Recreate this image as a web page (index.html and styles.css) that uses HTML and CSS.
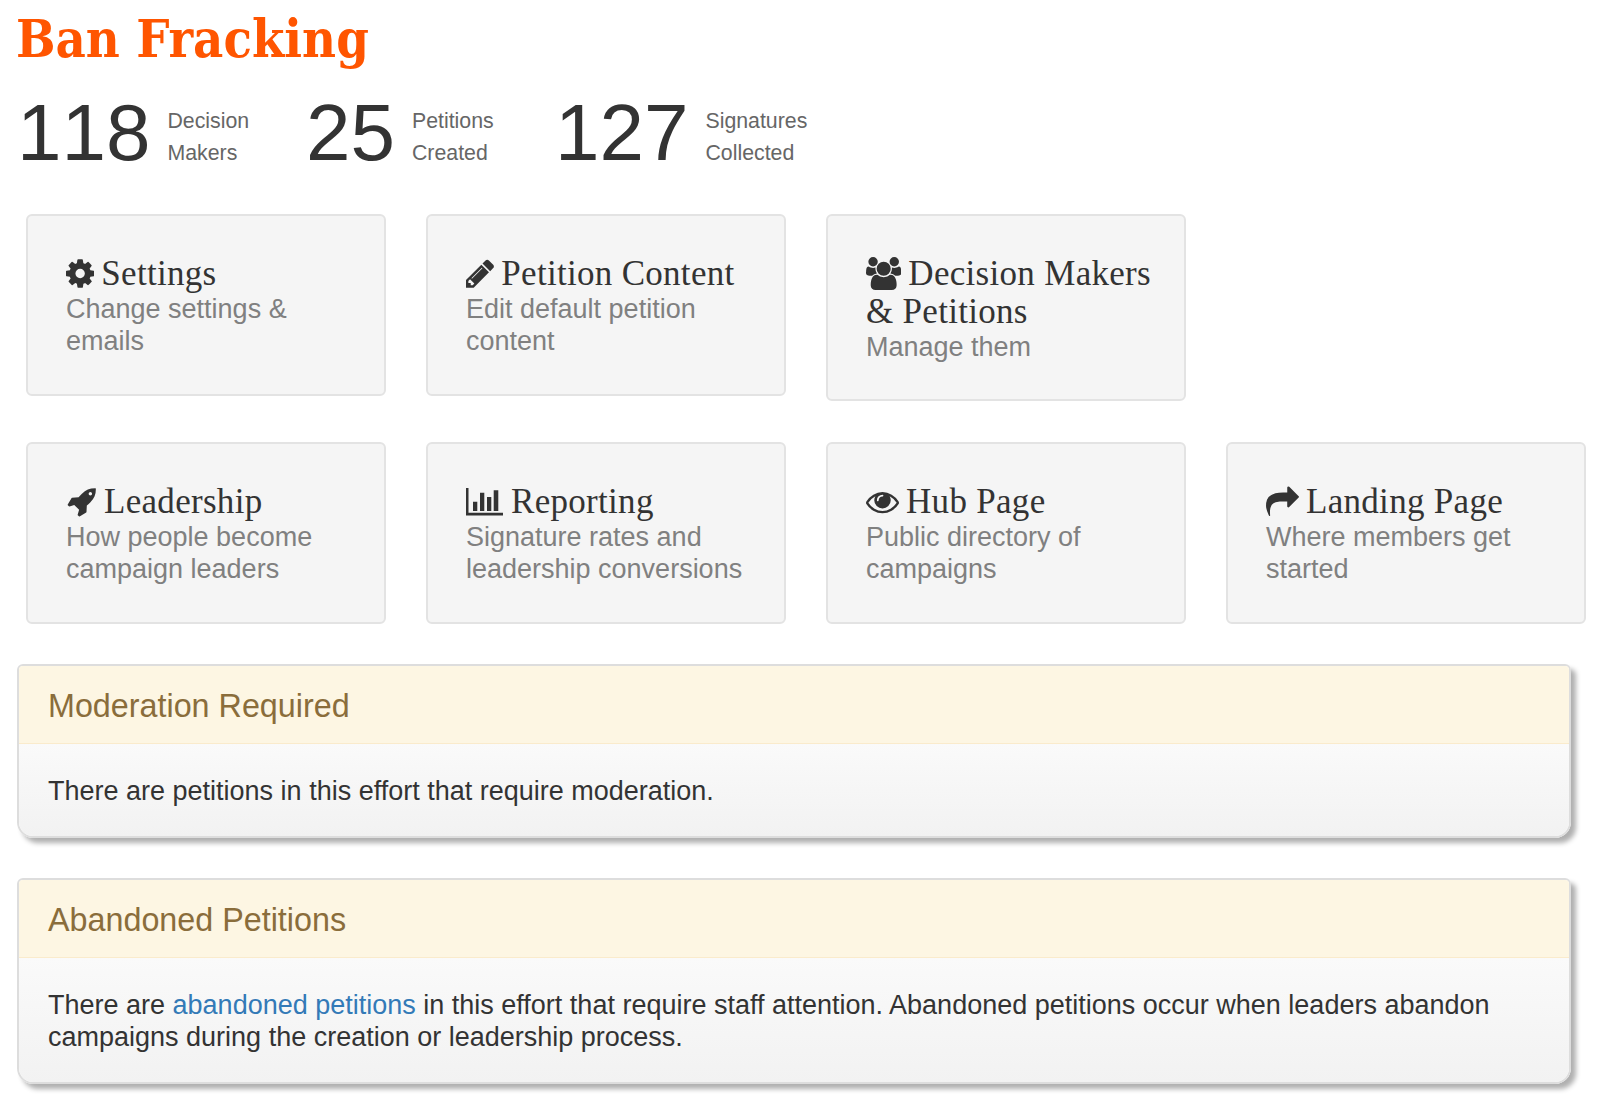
FILE: index.html
```html
<!DOCTYPE html>
<html lang="en">
<head>
    <meta charset="UTF-8">
    <title>Ban Fracking</title>
    <link rel="stylesheet" href="styles.css">
</head>
<body>
    <h1 class="title">Ban Fracking</h1>

    <div class="stats">
        <div class="stat stat-one">
            <span class="stat-number">118</span>
            <span class="stat-label">Decision<br>Makers</span>
        </div>
        <div class="stat stat-two">
            <span class="stat-number">25</span>
            <span class="stat-label">Petitions<br>Created</span>
        </div>
        <div class="stat">
            <span class="stat-number">127</span>
            <span class="stat-label">Signatures<br>Collected</span>
        </div>
    </div>

    <div class="card-row">
        <a class="card">
            <h3><svg class="icon" viewBox="0 0 1536 1792"><path d="M1024 896q0-106-75-181t-181-75-181 75-75 181 75 181 181 75 181-75 75-181zm512-109v222q0 12-8 23t-20 13l-185 28q-19 54-39 91 35 50 107 138 10 12 10 25t-9 23q-27 37-99 108t-94 71q-12 0-26-9l-138-108q-44 23-91 38-16 136-29 186-7 28-36 28h-222q-14 0-24.500-8.500t-11.500-21.500l-28-184q-49-16-90-37l-141 107q-10 9-25 9-14 0-25-11-126-114-165-168-7-10-7-23 0-12 8-23 15-21 51-66.500t54-70.500q-27-50-41-99l-183-27q-13-2-21-12.500t-8-23.500v-222q0-12 8-23t19-13l186-28q14-46 39-92-40-57-107-138-10-12-10-24 0-10 9-23 26-36 98.500-107.500t94.500-71.500q13 0 26 10l138 107q44-23 91-38 16-136 29-186 7-28 36-28h222q14 0 24.500 8.500t11.500 21.500l28 184q49 16 90 37l142-107q9-9 24-9 13 0 25 10 129 119 165 170 7 8 7 22 0 12-8 23-15 21-51 66.500t-54 70.500q26 50 41 98l183 28q13 2 21 12.500t8 23.500z"/></svg>Settings</h3>
            <p>Change settings &amp; emails</p>
        </a>
        <a class="card">
            <h3><svg class="icon" viewBox="0 0 1536 1792"><path d="M363 1536l91-91-235-235-91 91v107h128v128h107zm523-928q0-22-22-22-10 0-17 7l-542 542q-7 7-7 17 0 22 22 22 10 0 17-7l542-542q7-7 7-17zm-54-192l416 416-832 832h-416v-416zm683 96q0 53-37 90l-166 166-416-416 166-165q36-38 90-38 53 0 91 38l235 234q37 39 37 91z"/></svg>Petition Content</h3>
            <p>Edit default petition content</p>
        </a>
        <a class="card">
            <h3><svg class="icon" viewBox="0 0 1920 1792"><path d="M593 896q-162 5-265 128h-134q-82 0-138-40.500t-56-118.500q0-353 124-353 6 0 43.500 21t97.500 42.500 119 21.500q67 0 133-23-5 37-5 66 0 139 81 256zm1071 637q0 120-73 189.500t-194 69.500h-874q-121 0-194-69.500t-73-189.500q0-53 3.500-103.500t14-109 26.500-108.500 43-97.500 62-81 85.500-53.500 111.500-20q10 0 43 21.500t73 48 107 48 135 21.500 135-21.500 107-48 73-48 43-21.500q61 0 111.500 20t85.500 53.500 62 81 43 97.500 26.500 108.500 14 109 3.500 103.500zm-1024-1277q0 106-75 181t-181 75-181-75-75-181 75-181 181-75 181 75 75 181zm704 384q0 159-112.500 271.500t-271.500 112.500-271.500-112.500-112.500-271.500 112.500-271.500 271.500-112.500 271.500 112.500 112.500 271.500zm576 225q0 78-56 118.500t-138 40.500h-134q-103-123-265-128 81-117 81-256 0-29-5-66 66 23 133 23 59 0 119-21.500t97.500-42.500 43.500-21q124 0 124 353zm-128-609q0 106-75 181t-181 75-181-75-75-181 75-181 181-75 181 75 75 181z"/></svg>Decision Makers &amp; Petitions</h3>
            <p>Manage them</p>
        </a>
    </div>

    <div class="card-row">
        <a class="card">
            <h3><svg class="icon icon-rocket" viewBox="0 0 1792 1792"><path d="M1504 448q0-40-28-68t-68-28-68 28-28 68 28 68 68 28 68-28 28-68zm224-288q0 249-75.500 430.500t-253.500 360.500q-81 80-195 176l-20 379q-2 16-16 26l-384 224q-7 4-16 4-12 0-23-9l-64-64q-13-14-8-32l85-276-281-281-276 85q-3 1-9 1-14 0-23-9l-64-64q-17-19-5-39l224-384q10-14 26-16l379-20q96-114 176-195 188-187 358-258t431-71q14 0 24 9.500t10 22.500z"/></svg>Leadership</h3>
            <p>How people become campaign leaders</p>
        </a>
        <a class="card">
            <h3><svg class="icon icon-chart" viewBox="0 0 37 28"><path d="M0 0h2.500v24.700H37v2.800H0zM7 13.700h4.300V23H7zM14 4.700h4.300V23H14zM21 9h4.300v14H21zM27.700 2.300h4.600V23h-4.600z"/></svg>Reporting</h3>
            <p>Signature rates and leadership conversions</p>
        </a>
        <a class="card">
            <h3><svg class="icon" viewBox="0 0 1792 1792"><path d="M1664 960q-152-236-381-355 61 104 61 225 0 185-131.500 316.500t-316.500 131.500-316.500-131.500-131.500-316.500q0-121 61-225-229 119-381 355 133 205 333.500 326.500t434.500 121.500 434.500-121.500 333.500-326.500zm-720-384q0-20-14-34t-34-14q-125 0-214.500 89.500t-89.500 214.500q0 20 14 34t34 14 34-14 14-34q0-86 61-147t147-61q20 0 34-14t14-34zm848 384q0 34-20 69-140 230-376.500 368.500t-499.500 138.500-499.500-139-376.500-368q-20-35-20-69t20-69q140-229 376.500-368t499.500-139 499.500 139 376.500 368q20 35 20 69z"/></svg>Hub Page</h3>
            <p>Public directory of campaigns</p>
        </a>
        <a class="card">
            <h3><svg class="icon" viewBox="0 0 1792 1792"><path d="M1792 640q0 26-19 45l-512 512q-19 19-45 19t-45-19-19-45v-256h-224q-98 0-175.500 6t-154 21.500-133 42.500-105.500 69.500-79.500 103.500-47.500 143.500-17.500 190q0 55 5 123 0 6 2.500 23.500t2.500 26.500q0 15-8.500 25t-23.500 10q-16 0-28-17-7-9-13-22t-13.500-30-10.500-24q-127-285-127-451 0-199 53-333 162-403 875-403h224v-256q0-26 19-45t45-19 45 19l512 512q19 19 19 45z"/></svg>Landing Page</h3>
            <p>Where members get started</p>
        </a>
    </div>

    <div class="panel">
        <div class="panel-heading">Moderation Required</div>
        <div class="panel-body">There are petitions in this effort that require moderation.</div>
    </div>

    <div class="panel">
        <div class="panel-heading">Abandoned Petitions</div>
        <div class="panel-body">There are <a href="#">abandoned petitions</a> in this effort that require staff attention. Abandoned petitions occur when leaders abandon campaigns during the creation or leadership process.</div>
    </div>
</body>
</html>
```

FILE: styles.css
```css
body {
    font-family: "Liberation Sans", Arial, sans-serif;
    color: #333;
    background-color: #fff;
    margin: 0;
    padding: 0 44px 0 17px;
}
.title {
    margin: 0 0 0 -1px;
    height: 85px;
    font-family: "DejaVu Serif Condensed", "DejaVu Serif", serif;
    font-size: 52px;
    font-weight: bold;
    line-height: 78px;
    color: #ff5500;
}
.stats {
    display: flex;
    height: 129px;
}
.stat {
    display: flex;
}
.stat-one {
    width: 289px;
}
.stat-two {
    width: 249px;
}
.stat-number {
    font-size: 80px;
    font-kerning: none;
    line-height: 96px;
    margin-right: 17px;
}
.stat-label {
    font-size: 21.3px;
    line-height: 32px;
    color: #666;
    padding-top: 20px;
}
.card-row {
    display: grid;
    grid-template-columns: repeat(4, 360px);
    gap: 40px;
    align-items: start;
    margin: 0 0 41px 9px;
}
.card-row + .card-row {
    margin-bottom: 40px;
}
.card {
    display: block;
    min-height: 182px;
    box-sizing: border-box;
    padding: 39px 30px 36px 38px;
    background-color: #f5f5f5;
    border: 2px solid #e3e3e3;
    border-radius: 6px;
}
.card h3 {
    margin: 0;
    font-family: "Liberation Serif", Georgia, serif;
    font-size: 35px;
    font-weight: normal;
    letter-spacing: 0.3px;
    line-height: 38px;
    color: #333;
}
.card p {
    margin: 0;
    max-width: 280px;
    font-size: 27px;
    line-height: 32px;
    color: #808080;
}
.icon {
    height: 33px;
    width: auto;
    margin-right: 7px;
    vertical-align: -5px;
    fill: #333;
}
.icon-rocket {
    height: 31px;
    vertical-align: -4px;
}
.icon-chart {
    height: 28px;
    margin-right: 8px;
    vertical-align: -3px;
}
.panel {
    width: 1550px;
    margin-bottom: 40px;
    border: 2px solid #ddd;
    border-radius: 6px 6px 16px 16px;
    box-shadow: 5px 5px 5px #b0b0b0;
    overflow: hidden;
}
.panel-heading {
    height: 75px;
    padding: 2px 0 0 29px;
    font-size: 32.3px;
    line-height: 76px;
    color: #8a6d3b;
    background-color: #fdf6e3;
    border-bottom: 1px solid #faebcc;
}
.panel-body {
    padding: 31px 29px 29px;
    font-size: 27px;
    line-height: 32px;
    background: linear-gradient(#fafafa, #f2f2f2);
}
.panel-body a {
    color: #337ab7;
    text-decoration: none;
}
```
